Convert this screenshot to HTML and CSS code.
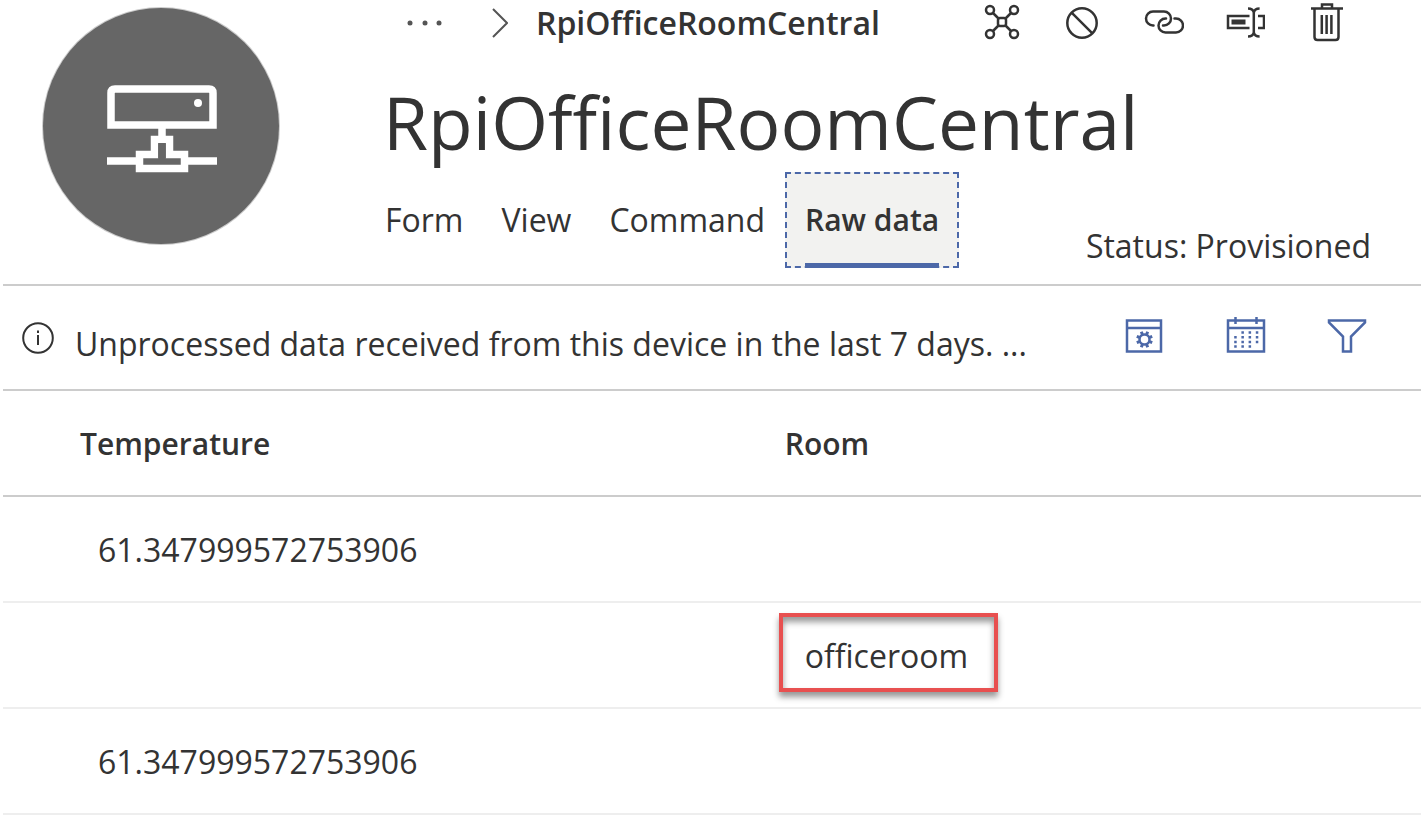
FILE: index.html
```html
<!DOCTYPE html>
<html lang="en">
<head>
<meta charset="utf-8">
<title>RpiOfficeRoomCentral</title>
<link rel="stylesheet" href="styles.css">
</head>
<body>
<header class="device">
  <div class="avatar">
    <svg width="110" height="88" viewBox="0 0 110 88" fill="none" stroke="#fff" stroke-width="7.500" aria-hidden="true">
      <path d="M4 40V8q0-4 4-4h94q4 0 4 4v32z"/>
      <circle cx="91" cy="18" r="4" fill="#fff" stroke="none"/>
      <path d="M55 43v12M0 76h33M77 76h33"/>
      <path d="M47.500 54.500h15v15h15v14h-45v-14h15z"/>
      <path d="M55 58v15" stroke="#666"/>
    </svg>
  </div>
  <div class="device-main">
    <div class="topline">
      <nav class="breadcrumb" aria-label="Breadcrumb">
        <button class="more" aria-label="More levels">
          <svg width="36" height="6" viewBox="0 0 36 6" fill="#555"><circle cx="3" cy="3" r="2.500"/><circle cx="18" cy="3" r="2.500"/><circle cx="32" cy="3" r="2.500"/></svg>
        </button>
        <svg class="chevron" width="16" height="30" viewBox="0 0 16 30" fill="none" stroke="#555" stroke-width="2" aria-hidden="true"><path d="M1 1l14 14L1 29"/></svg>
        <span class="crumb">RpiOfficeRoomCentral</span>
      </nav>
      <div class="actions">
        <button class="icon" aria-label="Attach to gateway">
          <svg width="40" height="40" viewBox="0 0 40 40" fill="none" stroke="#333" stroke-width="2.500"><circle cx="8" cy="7" r="4"/><circle cx="32" cy="7" r="4"/><circle cx="8" cy="31" r="4"/><circle cx="32" cy="31" r="4"/><rect x="16" y="15" width="8" height="8" rx="2"/><path d="M11 10l5.500 5.500M29 10l-5.500 5.500M11 28l5.500-5.500M29 28l-5.500-5.500"/></svg>
        </button>
        <button class="icon" aria-label="Block">
          <svg width="40" height="40" viewBox="0 0 40 40" fill="none" stroke="#333" stroke-width="2.500"><circle cx="19" cy="20" r="14.700"/><path d="M8.600 9.600l20.800 20.800"/></svg>
        </button>
        <button class="icon" aria-label="Connect">
          <svg width="40" height="40" viewBox="0 0 40 40" fill="none" stroke="#333" stroke-width="2.500" stroke-linecap="round"><path d="M9.500 22.500h-.5A7 7 0 0 1 9 8.500h11a7 7 0 0 1 0 14h-1"/><path d="M22 15.500h-.5a7 7 0 0 0 0 14H32a7 7 0 0 0 0-14h-1.500"/></svg>
        </button>
        <button class="icon" aria-label="Rename">
          <svg width="40" height="40" viewBox="0 0 40 40" fill="none" stroke="#333" stroke-width="2.500"><path d="M24.500 13H3v12h21.500M33 13h6v12h-6"/><path d="M6.500 19h14" stroke-width="5"/><path d="M28.800 9v22M23 5.500q5 0 5.800 4q.8-4 5.800-4M23 33.500q5 0 5.800-4q.8 4 5.800 4"/></svg>
        </button>
        <button class="icon" aria-label="Delete">
          <svg width="40" height="40" viewBox="0 0 40 40" fill="none" stroke="#333" stroke-width="2.500"><path d="M5 5.500h32M16 5V1.500h10V5M8.500 6v28q0 3 3 3h18q3 0 3-3V6M15.800 12v19M20.600 12v19M25.400 12v19"/></svg>
        </button>
      </div>
    </div>
    <h1 class="title">RpiOfficeRoomCentral</h1>
    <div class="tabline">
      <div class="tabs" role="tablist">
        <button class="tab" role="tab">Form</button>
        <button class="tab" role="tab">View</button>
        <button class="tab" role="tab">Command</button>
        <button class="tab tab-selected" role="tab" aria-selected="true"><span class="tab-text">Raw data</span></button>
      </div>
      <p class="status">Status: Provisioned</p>
    </div>
  </div>
</header>
<section class="notice">
  <svg class="info" width="32" height="32" viewBox="0 0 32 32" fill="none" stroke="#333" stroke-width="2" aria-hidden="true"><circle cx="16" cy="16" r="14.800"/><path d="M16 13v10M16 8.500v2.500"/></svg>
  <p class="notice-text">Unprocessed data received from this device in the last 7 days. ...</p>
  <div class="tools">
    <button class="icon" aria-label="Column options">
      <svg width="40" height="40" viewBox="0 0 40 40" fill="none" stroke="#4c68a8" stroke-width="2.500"><path d="M2 4.500h34v31H2zM2 12h34"/><circle cx="19.500" cy="23.500" r="5"/><path stroke-width="3" d="M24 21.600l3.200-1.300M24 25.400l3.200 1.300M15 21.600l-3.200-1.300M15 25.400l-3.200 1.300M17.600 19l-1.300-3.200M21.400 19l1.300-3.200M17.600 28l-1.300 3.200M21.400 28l1.300 3.200"/></svg>
    </button>
    <button class="icon" aria-label="Time range">
      <svg width="40" height="40" viewBox="0 0 40 40" fill="none" stroke="#4c68a8" stroke-width="2.500"><path d="M2 4.500h36v31H2zM2 12h36M9.500 1v7M30.500 1v7"/><path stroke-dasharray="2.500 4.700" d="M15.400 16.500h18M8.200 21.200h25M8.200 25.900h25M8.200 30.600h18"/></svg>
    </button>
    <button class="icon" aria-label="Filter">
      <svg width="40" height="40" viewBox="0 0 40 40" fill="none" stroke="#4c68a8" stroke-width="2.500"><path d="M2 4.500h36v2L24 20.500v15h-8v-15L2 6.500z"/></svg>
    </button>
  </div>
</section>
<table class="data">
  <thead>
    <tr><th class="reading" scope="col">Temperature</th><th scope="col">Room</th></tr>
  </thead>
  <tbody>
    <tr><td>61.347999572753906</td><td></td></tr>
    <tr><td></td><td><span class="marked">officeroom</span></td></tr>
    <tr><td>61.347999572753906</td><td></td></tr>
  </tbody>
</table>
</body>
</html>
```
FILE: styles.css
```css
* {
  box-sizing: border-box;
}

body {
  margin: 0;
  padding: 0 4px 0 3px;
  background: #fff;
  color: #333;
  font-family: "Open Sans", "Noto Sans", sans-serif;
  font-size: 32px;
  line-height: 44px;
  font-variant-ligatures: none;
}

button {
  margin: 0;
  padding: 0;
  border: 0;
  background: none;
  color: inherit;
  font: inherit;
  font-variant-ligatures: none;
}

svg {
  display: block;
}

h1,
p {
  margin: 0;
}

.device {
  display: flex;
  gap: 104px;
  padding: 0 50px 16px 40px;
  border-bottom: 2px solid #ccc;
}

.avatar {
  display: flex;
  flex: none;
  align-items: center;
  justify-content: center;
  width: 236px;
  height: 236px;
  margin-top: 8px;
  padding: 5px 0 0 2px;
  border-radius: 50%;
  background: #666;
  box-shadow: 0 0 0 1px #ccc;
}

.device-main {
  flex: 1;
  min-width: 0;
}

.topline {
  display: flex;
  align-items: center;
  justify-content: space-between;
  padding: 1px 25px 0 24px;
}

.breadcrumb {
  display: flex;
  align-items: center;
}

.chevron {
  margin: 0 28px 0 49px;
}

.crumb {
  font-weight: 600;
}

.actions {
  display: flex;
  gap: 41px;
}

.icon {
  width: 40px;
  height: 40px;
}

.title {
  height: 127px;
  font-size: 73px;
  font-weight: 400;
  line-height: 154px;
  white-space: nowrap;
}

.tabline {
  display: flex;
  align-items: flex-end;
  justify-content: space-between;
}

.tabs {
  display: flex;
  align-items: center;
  gap: 38px;
  padding-left: 2px;
}

.tab-selected {
  display: flex;
  justify-content: center;
  height: 96px;
  margin-left: -18px;
  padding: 0 18px;
  border: 2px dashed #4c68a8;
  background: #f2f2f0;
  font-size: 30px;
  font-weight: 600;
}

.tab-text {
  height: 94px;
  border-bottom: 5px solid #4c68a8;
  line-height: 92px;
}

.status {
  white-space: nowrap;
}

.notice {
  display: flex;
  align-items: center;
  padding: 0 54px 0 19px;
  height: 105px;
  border-bottom: 2px solid #ccc;
}

.info {
  flex: none;
  margin-right: 21px;
}

.notice-text {
  flex: 1;
  padding-top: 12px;
  white-space: nowrap;
}

.tools {
  display: flex;
  gap: 61px;
  padding-bottom: 4px;
}

.data {
  width: 100%;
  border-collapse: collapse;
  table-layout: fixed;
}

.reading {
  width: 49.7%;
}

.data th {
  height: 105px;
  padding: 2px 0 0 77px;
  border-bottom: 2px solid #ccc;
  font-size: 30px;
  font-weight: 600;
  text-align: left;
}

.data td {
  height: 106px;
  padding: 2px 0 0 95px;
  border-bottom: 2px solid #eee;
}

.marked {
  display: block;
  width: fit-content;
  margin: 0 0 8px -24px;
  padding: 17px 26px 10px 22px;
  border: 4px solid #e85050;
  box-shadow: 0 5px 6px #999, inset 0 5px 6px #999;
}
```
